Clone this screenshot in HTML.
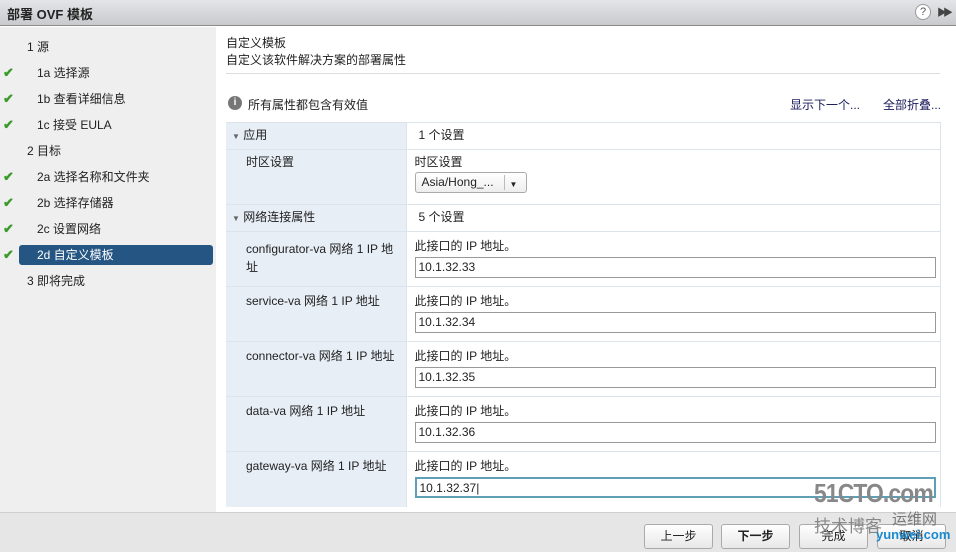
<!DOCTYPE html>
<html><head><meta charset="utf-8"><style>
*{box-sizing:border-box;margin:0;padding:0}
body{width:956px;height:552px;overflow:hidden;font-family:"Liberation Sans","Noto Sans CJK SC",sans-serif;font-size:12px;color:#222;background:#fff;position:relative}
.abs{position:absolute}
#title{left:0;top:0;width:956px;height:26px;background:linear-gradient(#e4e5e8,#c9cacd);border-bottom:1px solid #8a8a8a}
#title b{position:absolute;left:7px;top:4px;font-size:13px;color:#222}
#side{left:0;top:27px;width:216px;height:485px;background:#efefef}
.it{position:absolute;left:0;width:216px;height:20px;line-height:20px;font-size:12px}
.ck{position:absolute;left:3px;top:0;color:#3a9a2a;font-weight:bold;font-size:13px}
.sel{background:#255582;color:#fff;border-radius:3px;left:19px;width:194px}
#foot{left:0;top:512px;width:956px;height:40px;background:#e6e6e6;border-top:1px solid #d0d0d0}
.btn{position:absolute;top:524px;height:25px;width:69px;border:1px solid #aaa;border-radius:3px;background:linear-gradient(#fff,#e8e8e8);text-align:center;line-height:23px;font-size:12px}
table{position:absolute;left:226px;top:122px;width:715px;border-collapse:collapse}
td{border-top:1px solid #dde3ea;vertical-align:top;font-size:12px}
td.l{width:180px;background:#e7eef6;padding-left:20px}
td.r{padding-left:8px;border-left:1px solid #dde3ea;border-right:1px solid #dde3ea}
.inp{width:521px;height:21px;border:1px solid #999;margin-top:3px;padding-left:3px;line-height:19px;font-size:12px}
</style></head><body>
<div id="title" class="abs"><b>部署 OVF 模板</b>
<div class="abs" style="left:915px;top:4px;width:16px;height:16px;border:1px solid #999;border-radius:50%;background:#fff;font-size:11px;text-align:center;line-height:14px;color:#555">?</div>
<div class="abs" style="left:937px;top:4px;font-size:10px;color:#444;letter-spacing:-4px">▶▶</div></div>
<div id="side" class="abs">
<div class="it" style="top:10px;left:27px">1 源</div>
<div class="it" style="top:36px"><span class="ck">✔</span><span style="margin-left:37px">1a 选择源</span></div>
<div class="it" style="top:62px"><span class="ck">✔</span><span style="margin-left:37px">1b 查看详细信息</span></div>
<div class="it" style="top:88px"><span class="ck">✔</span><span style="margin-left:37px">1c 接受 EULA</span></div>
<div class="it" style="top:114px;left:27px">2 目标</div>
<div class="it" style="top:140px"><span class="ck">✔</span><span style="margin-left:37px">2a 选择名称和文件夹</span></div>
<div class="it" style="top:166px"><span class="ck">✔</span><span style="margin-left:37px">2b 选择存储器</span></div>
<div class="it" style="top:192px"><span class="ck">✔</span><span style="margin-left:37px">2c 设置网络</span></div>
<div class="it" style="top:218px"><span class="ck">✔</span></div>
<div class="it sel" style="top:218px"><span style="margin-left:18px">2d 自定义模板</span></div>
<div class="it" style="top:244px;left:27px">3 即将完成</div>
</div>
<div class="abs" style="left:226px;top:35px;line-height:17px">自定义模板<br>自定义该软件解决方案的部署属性</div>
<div class="abs" style="left:226px;top:73px;width:714px;border-top:1px solid #ddd"></div>
<div class="abs" style="left:228px;top:96px;width:14px;height:14px;border-radius:50%;background:#777;color:#fff;font-size:10px;text-align:center;line-height:14px;font-weight:bold">i</div>
<div class="abs" style="left:248px;top:96px">所有属性都包含有效值</div>
<div class="abs" style="left:790px;top:96px;color:#1a1a5a">显示下一个...</div>
<div class="abs" style="left:883px;top:96px;color:#1a1a5a">全部折叠...</div>
<table>
<tr style="height:26px"><td class="l" style="padding-left:6px;line-height:25px"><span style="font-size:8px;color:#666">▼</span> 应用</td><td class="r" style="padding-left:12px;line-height:25px">1 个设置</td></tr>
<tr style="height:55px"><td class="l" style="padding-top:3px">时区设置</td><td class="r" style="padding-top:3px">时区设置<div style="margin-top:2px;width:112px;height:21px;border:1px solid #aaa;border-radius:3px;background:linear-gradient(#fff,#eee);line-height:19px;padding-left:6px;position:relative">Asia/Hong_...<span style="position:absolute;left:88px;top:2px;height:15px;border-left:1px solid #bbb;padding-left:5px;font-size:8px">▼</span></div></td></tr>
<tr style="height:26px"><td class="l" style="padding-left:6px;line-height:25px"><span style="font-size:8px;color:#666">▼</span> 网络连接属性</td><td class="r" style="padding-left:12px;line-height:25px">5 个设置</td></tr>
<tr style="height:55px"><td class="l" style="padding-top:8px;line-height:18px">configurator-va 网络 1 IP 地<br>址</td><td class="r" style="padding-top:5px">此接口的 IP 地址。<div class="inp">10.1.32.33</div></td></tr>
<tr style="height:55px"><td class="l" style="padding-top:5px">service-va 网络 1 IP 地址</td><td class="r" style="padding-top:5px">此接口的 IP 地址。<div class="inp">10.1.32.34</div></td></tr>
<tr style="height:55px"><td class="l" style="padding-top:5px">connector-va 网络 1 IP 地址</td><td class="r" style="padding-top:5px">此接口的 IP 地址。<div class="inp">10.1.32.35</div></td></tr>
<tr style="height:55px"><td class="l" style="padding-top:5px">data-va 网络 1 IP 地址</td><td class="r" style="padding-top:5px">此接口的 IP 地址。<div class="inp">10.1.32.36</div></td></tr>
<tr style="height:55px"><td class="l" style="padding-top:5px">gateway-va 网络 1 IP 地址</td><td class="r" style="padding-top:5px">此接口的 IP 地址。<div class="inp" style="border:2px solid #5f9fb5">10.1.32.37|</div></td></tr>
</table>
<div id="foot" class="abs"></div>
<div class="btn" style="left:644px">上一步</div>
<div class="btn" style="left:721px;font-weight:bold">下一步</div>
<div class="btn" style="left:799px">完成</div>
<div class="btn" style="left:877px">取消</div>
<div class="abs" style="left:814px;top:478px;font-size:26px;font-weight:bold;color:#888;letter-spacing:-1px;transform:scaleX(0.88);transform-origin:left">51CTO.com</div>
<div class="abs" style="left:814px;top:512px;font-size:17px;color:#888">技术博客</div>
<div class="abs" style="left:892px;top:508px;font-size:15px;color:#777">运维网</div>
<div class="abs" style="left:876px;top:527px;font-size:13px;font-weight:bold;color:#1a8ad0">yunwei.com</div>
</body></html>
